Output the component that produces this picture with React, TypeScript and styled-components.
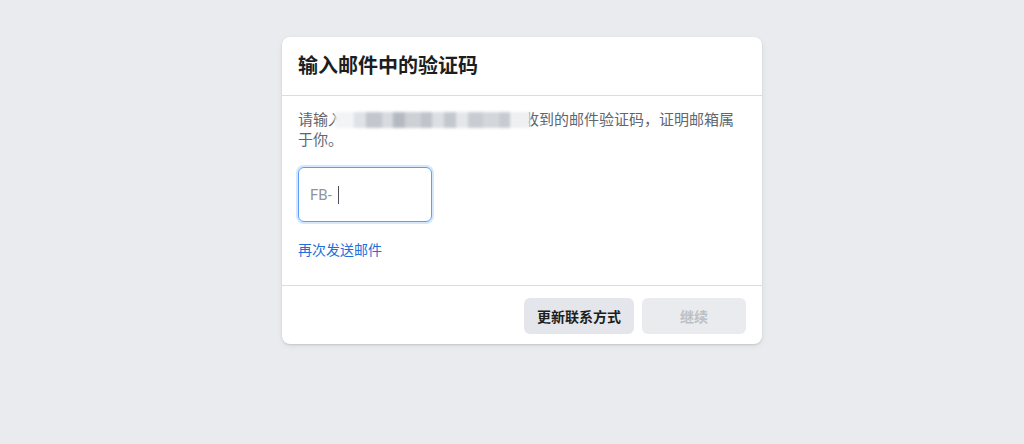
import React from 'react';
import styled, { createGlobalStyle } from 'styled-components';

const GlobalStyle = createGlobalStyle`
  html, body {
    margin: 0;
    padding: 0;
    background: #e9ebee;
    font-family: Roboto, 'Noto Sans CJK SC', sans-serif;
  }
`;

const Page = styled.div`
  display: flex;
  justify-content: center;
  align-items: flex-start;
  padding: 37px 0 0 20px;
  min-height: 444px;
  box-sizing: border-box;
`;

const Card = styled.div`
  width: 480px;
  background: #ffffff;
  border-radius: 8px;
  box-shadow: 0 1px 2px rgba(0, 0, 0, 0.12), 0 2px 6px rgba(0, 0, 0, 0.06);
  overflow: hidden;
`;

const Header = styled.div`
  height: 58px;
  padding: 0 16px;
  display: flex;
  align-items: center;
  border-bottom: 1px solid #dadde1;
`;

const Title = styled.h2`
  margin: 0;
  font-size: 20px;
  font-weight: 700;
  color: #1c1e21;
  line-height: 24px;
`;

const Body = styled.div`
  padding: 14px 16px 25px;
  border-bottom: 1px solid #dadde1;
`;

const Text = styled.p`
  margin: 0;
  font-size: 15px;
  line-height: 20px;
  color: #606770;
`;

// pixelated, blurred stand-in for the hidden e-mail address
const Redacted = styled.span`
  display: inline-block;
  width: 181px;
  height: 20px;
  vertical-align: top;
  position: relative;

  &::after {
    content: '';
    position: absolute;
    left: -8px;
    right: -6px;
    top: 2px;
    height: 16px;
    filter: blur(1.5px);
    background: linear-gradient(
      to right,
      #f3f4f6 0 10%,
      #dfe2e6 10% 16%,
      #c3c7cd 16% 24%,
      #d7dade 24% 30%,
      #b5bac2 30% 36%,
      #cdd1d6 36% 44%,
      #bfc3ca 44% 50%,
      #dcdfe3 50% 56%,
      #c4c8ce 56% 62%,
      #e4e6e9 62% 68%,
      #c9cdd3 68% 76%,
      #d3d7dc 76% 84%,
      #c7ccd2 84% 90%,
      #eef0f2 90% 100%
    );
  }
`;

const CodeBox = styled.div`
  margin-top: 17px;
  width: 134px;
  height: 55px;
  box-sizing: border-box;
  border: 1px solid #5b9ef7;
  border-radius: 6px;
  box-shadow: 0 0 0 2px #d6e6fc;
  display: flex;
  align-items: center;
  padding-left: 11px;
  font-size: 15px;
  color: #90949c;
`;

const Caret = styled.span`
  display: inline-block;
  width: 1px;
  height: 18px;
  margin-left: 6px;
  background: #4b4f56;
`;

const ResendLink = styled.a`
  display: inline-block;
  margin-top: 18px;
  font-size: 14px;
  line-height: 20px;
  color: #216fdb;
  text-decoration: none;
  cursor: pointer;
`;

const Footer = styled.div`
  display: flex;
  justify-content: flex-end;
  gap: 8px;
  padding: 12px 16px 10px;
`;

const Button = styled.button<{ $disabled?: boolean; $width?: number }>`
  height: 36px;
  width: ${p => (p.$width ? `${p.$width}px` : 'auto')};
  padding: 0 12px;
  border: none;
  border-radius: 6px;
  background: ${p => (p.$disabled ? '#e9ebee' : '#e4e6eb')};
  color: ${p => (p.$disabled ? '#bcc0c4' : '#1c1e21')};
  font-family: Roboto, 'Noto Sans CJK SC', sans-serif;
  font-size: 14px;
  font-weight: 700;
  cursor: ${p => (p.$disabled ? 'default' : 'pointer')};
`;

export default function App() {
  return (
    <>
      <GlobalStyle />
      <Page>
        <Card>
          <Header>
            <Title>输入邮件中的验证码</Title>
          </Header>
          <Body>
            <Text>
              请输入
              <Redacted />
              收到的邮件验证码，证明邮箱属于你。
            </Text>
            <CodeBox>
              FB-
              <Caret />
            </CodeBox>
            <ResendLink>再次发送邮件</ResendLink>
          </Body>
          <Footer>
            <Button $width={110}>更新联系方式</Button>
            <Button $width={104} $disabled>
              继续
            </Button>
          </Footer>
        </Card>
      </Page>
    </>
  );
}
